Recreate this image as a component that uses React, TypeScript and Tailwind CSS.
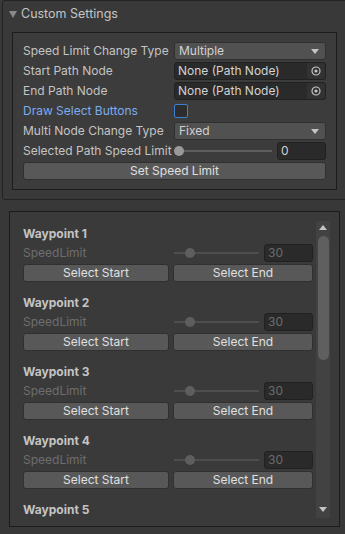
import React from 'react'

const font = { fontFamily: 'Inter, "Noto Sans", sans-serif' }

function DropArrow() {
  return (
    <svg width="8" height="5" viewBox="0 0 8 5" className="shrink-0">
      <path d="M0 0 L8 0 L4 5 Z" fill="#c4c4c4" />
    </svg>
  )
}

function Dropdown({ value }: { value: string }) {
  return (
    <div className="flex h-[18px] flex-1 items-center justify-between rounded-[3px] border border-[#303030] bg-[#515151] pl-[4px] pr-[6px] text-[#d2d2d2]">
      <span>{value}</span>
      <DropArrow />
    </div>
  )
}

function ObjectField({ value }: { value: string }) {
  return (
    <div className="flex h-[18px] flex-1 items-center rounded-[3px] border border-[#212121] bg-[#2a2a2a] text-[#d2d2d2]">
      <span className="flex-1 truncate pl-[3px]">{value}</span>
      <div className="flex h-full w-[18px] items-center justify-center rounded-r-[3px] bg-[#323232]">
        <svg width="10" height="10" viewBox="0 0 10 10">
          <circle cx="5" cy="5" r="4" fill="none" stroke="#c4c4c4" strokeWidth="1.2" />
          <circle cx="5" cy="5" r="1.6" fill="#c4c4c4" />
        </svg>
      </div>
    </div>
  )
}

function Slider({ pos, value, dim }: { pos: number; value: string; dim?: boolean }) {
  return (
    <div className="flex flex-1 items-center gap-[5px]">
      <div className="relative flex h-[18px] flex-1 items-center">
        <div className={`h-[2px] w-full ${dim ? 'bg-[#4e4e4e]' : 'bg-[#5e5e5e]'}`} />
        <div
          className={`absolute h-[10px] w-[10px] rounded-full ${dim ? 'bg-[#5e5e5e]' : 'bg-[#999999]'}`}
          style={{ left: pos }}
        />
      </div>
      <div
        className={`flex h-[18px] w-[49px] items-center rounded-[3px] border border-[#212121] bg-[#2a2a2a] pl-[3px] ${
          dim ? 'text-[#6c6c6c]' : 'text-[#d2d2d2]'
        }`}
      >
        {value}
      </div>
    </div>
  )
}

function Row({ label, children, labelClass }: { label: string; children: React.ReactNode; labelClass?: string }) {
  return (
    <div className="flex h-[18px] items-center">
      <div className={`w-[151px] shrink-0 whitespace-nowrap ${labelClass ?? 'text-[#c4c4c4]'}`}>{label}</div>
      {children}
    </div>
  )
}

function Button({ label }: { label: string }) {
  return (
    <div className="flex h-[18px] flex-1 items-center justify-center rounded-[3px] border border-[#303030] bg-[#585858] text-[#e0e0e0]">
      {label}
    </div>
  )
}

function Waypoint({ n, titleOnly }: { n: number; titleOnly?: boolean }) {
  return (
    <div className="mb-[12px]">
      <div className="flex h-[18px] items-center font-bold text-[#c4c4c4]">Waypoint {n}</div>
      {!titleOnly && (
        <>
          <div className="mt-[1px] flex h-[18px] items-center">
            <div className="w-[151px] shrink-0 text-[#6e6e6e]">SpeedLimit</div>
            <Slider pos={11} value="30" dim />
          </div>
          <div className="mt-[2px] flex h-[18px] gap-[4px]">
            <div className="flex w-[146px]">
              <Button label="Select Start" />
            </div>
            <Button label="Select End" />
          </div>
        </>
      )}
    </div>
  )
}

export default function App() {
  return (
    <div className="h-[534px] w-[345px] overflow-hidden bg-[#383838] text-[12px]" style={font}>
      <div className="ml-[2px] w-[350px] rounded-[3px] border border-[#232323] bg-[#393939] pb-[9px]">
        <div className="flex h-[27px] items-center pl-[6px] text-[#c4c4c4]">
          <svg width="8" height="7" viewBox="0 0 8 7" className="mr-[4px]">
            <path d="M0 0 L8 0 L4 7 Z" fill="#8a8a8a" />
          </svg>
          <span className="text-[12.5px]">Custom Settings</span>
        </div>
        <div className="ml-[9px] mt-[4px] w-[325px] border border-[#1c1c1c] bg-[#3c3c3c] px-[10px] pb-[9px] pt-[9px]">
          <div className="flex flex-col gap-[2px]">
            <Row label="Speed Limit Change Type">
              <Dropdown value="Multiple" />
            </Row>
            <Row label="Start Path Node">
              <ObjectField value="None (Path Node)" />
            </Row>
            <Row label="End Path Node">
              <ObjectField value="None (Path Node)" />
            </Row>
            <Row label="Draw Select Buttons" labelClass="text-[#7babf0]">
              <div className="h-[14px] w-[14px] rounded-[2px] border border-[#3f7fcf] bg-[#2d2d2d]" />
            </Row>
            <Row label="Multi Node Change Type">
              <Dropdown value="Fixed" />
            </Row>
            <Row label="Selected Path Speed Limit">
              <Slider pos={0} value="0" />
            </Row>
            <div className="flex h-[18px]">
              <Button label="Set Speed Limit" />
            </div>
          </div>
        </div>
      </div>

      <div className="ml-[9px] mt-[11px] flex h-[316px] w-[331px] border border-[#1c1c1c] bg-[#3a3a3a] pb-[8px]">
        <div className="h-[306px] flex-1 overflow-hidden pl-[13px] pr-[3px] pt-[13px]">
          {[1, 2, 3, 4].map((n) => (
            <Waypoint key={n} n={n} />
          ))}
          <Waypoint n={5} titleOnly />
        </div>
        <div className="mr-[9px] mt-[9px] flex h-[297px] w-[14px] flex-col items-center bg-[#424242]">
          <svg width="8" height="5" viewBox="0 0 8 5" className="mt-[4px]">
            <path d="M0 5 L8 5 L4 0 Z" fill="#c4c4c4" />
          </svg>
          <div className="mt-[6px] h-[124px] w-[11px] rounded-full bg-[#5f5f5f]" />
          <div className="flex-1" />
          <svg width="8" height="5" viewBox="0 0 8 5" className="mb-[6px]">
            <path d="M0 0 L8 0 L4 5 Z" fill="#c4c4c4" />
          </svg>
        </div>
      </div>
    </div>
  )
}
